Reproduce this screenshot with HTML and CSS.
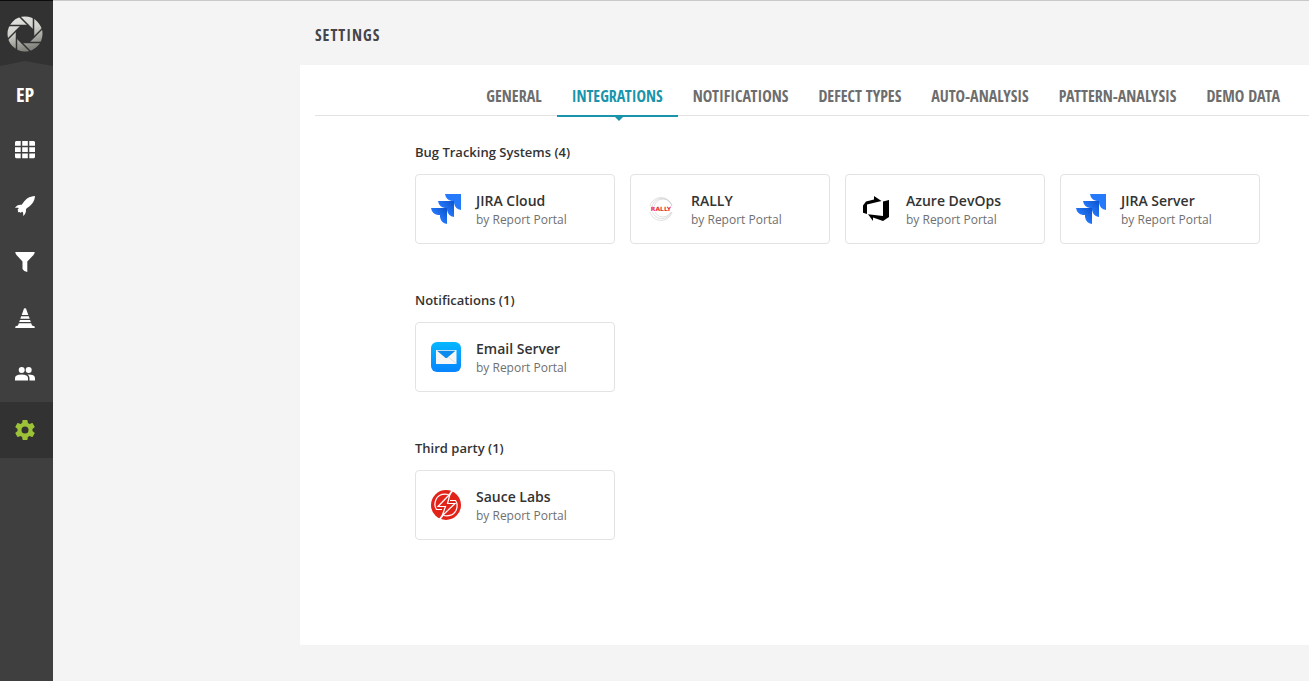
FILE: index.html
```html
<!DOCTYPE html>
<html lang="en">
<head>
<meta charset="utf-8">
<meta name="viewport" content="width=device-width, initial-scale=1">
<title>Settings</title>
<link rel="stylesheet" href="styles.css">
</head>
<body>
<svg class="defs" aria-hidden="true">
  <defs>
    <linearGradient id="jira-grad" x1="0.9" y1="0.1" x2="0.4" y2="0.6"><stop offset="0" stop-color="#0f58d2"/><stop offset="1" stop-color="#2579fb"/></linearGradient>
    <linearGradient id="mail-grad" x1="0" y1="0" x2="0" y2="1"><stop offset="0" stop-color="#06b7ff"/><stop offset="1" stop-color="#0784ff"/></linearGradient>
    <linearGradient id="logo-grad" x1="0" y1="0" x2="0.3" y2="1"><stop offset="0" stop-color="#e8e8e6"/><stop offset="0.5" stop-color="#d0d0cc"/><stop offset="1" stop-color="#85857f"/></linearGradient>
    <symbol id="jira" viewBox="0 0 30 30">
      <path fill="#2579fb" d="M14 0H30V16Q24 15 23 9V7H21Q15 6 14 0Z"/>
      <path fill="url(#jira-grad)" d="M7 7H23V23Q17 22 16 16V14H14Q8 13 7 7Z"/>
      <path fill="url(#jira-grad)" d="M0 14H16V30Q10 29 9 23V21H7Q1 20 0 14Z"/>
    </symbol>
  </defs>
</svg>
<div class="app">
  <aside class="sidebar">
    <a class="logo" href="#" aria-label="Home">
      <svg width="36" height="36" viewBox="-18 -18 36 36">
        <path fill="url(#logo-grad)" fill-rule="evenodd" d="M0-17.5A17.5 17.5 0 1 1 0 17.5A17.5 17.5 0 1 1 0-17.5ZM-3.500-8.500L-8.500-3.500V3.500L-3.500 8.500H3.500L8.500 3.500V-3.500L3.500-8.500Z"/>
        <g stroke="#323232" stroke-width="1.500">
          <path d="M3.500-8.500H-17"/><path d="M3.500-8.500H-17" transform="rotate(45)"/><path d="M3.500-8.500H-17" transform="rotate(90)"/><path d="M3.500-8.500H-17" transform="rotate(135)"/><path d="M3.500-8.500H-17" transform="rotate(180)"/><path d="M3.500-8.500H-17" transform="rotate(225)"/><path d="M3.500-8.500H-17" transform="rotate(270)"/><path d="M3.500-8.500H-17" transform="rotate(315)"/>
        </g>
      </svg>
    </a>
    <nav class="menu">
      <a class="menu-item project" href="#">EP</a>
      <a class="menu-item" href="#" aria-label="Dashboards"><svg width="20" height="18" viewBox="0 0 20 18" fill="#fff"><path d="M1 0H5.700V4.700H0V1ZM7.200 0H12.800V4.700H7.200ZM14.300 0H19L20 1V4.700H14.300ZM0 6.200H5.700V11H0ZM7.200 6.200H12.800V11H7.200ZM14.300 6.200H20V11H14.300ZM0 12.500H5.700V17.300H1L0 16.300ZM7.200 12.500H12.800V17.300H7.200ZM14.300 12.500H20V16.300L19 17.300H14.300Z"/></svg></a>
      <a class="menu-item" href="#" aria-label="Launches"><svg width="20" height="20" viewBox="0 0 20 20" fill="#fff"><path d="M20 0C14 .4 11 2.800 8 7L6.700 8.800C3.500 8.500 1.500 9.500 0 12C1.500 11.500 2.800 11.600 3.800 12L2.500 14L3.200 14.700L2.800 16.200L4.500 15.900L5.200 16.800L7.500 15.700C8.200 16.800 8.500 18 8 20C10.500 18.500 11.200 16 11 13L12.800 11.600C17 8.500 19.600 5.500 20 0Z"/></svg></a>
      <a class="menu-item" href="#" aria-label="Filters"><svg width="20" height="20" viewBox="0 0 20 20" fill="#fff"><path d="M.3 0H19.700Q19.700 1.500 18.500 3L12.300 9.600V20Q8.800 19.700 7.500 17V9.600L1.500 3Q.3 1.500.3 0Z"/></svg></a>
      <a class="menu-item" href="#" aria-label="Debug"><svg width="20" height="20" viewBox="0 0 20 20" fill="#fff"><path d="M9 .6Q10 0 11 .6L13.300 7H6.700ZM6.200 8.200H13.800L14.700 10.700H5.300ZM4.900 12H15.100L15.800 14H4.200ZM3.800 15.200H16.200L17 17.500L19.700 18.500V20H.3V18.500L3 17.500Z"/></svg></a>
      <a class="menu-item" href="#" aria-label="Members"><svg width="20" height="14" viewBox="0 0 20 14" fill="#fff"><circle cx="6.700" cy="3" r="3"/><circle cx="13.700" cy="3" r="3"/><path d="M0 13.500V11Q0 7.500 6.500 7.500T13 11V13.500ZM12.500 7.600Q20 7.500 20 11V13.500H14.500V11Q14.500 9 12.500 7.600Z"/></svg></a>
      <a class="menu-item active" href="#" aria-label="Settings" aria-current="page"><svg width="20" height="20" viewBox="2 2 20 20" fill="#9cc237"><path d="M19.430 12.980c.04-.32.070-.64.070-.98s-.03-.66-.07-.98l2.110-1.650c.19-.15.240-.42.120-.64l-2-3.460c-.12-.22-.39-.3-.61-.22l-2.490 1c-.52-.4-1.080-.73-1.690-.98l-.38-2.650C14.460 2.180 14.250 2 14 2h-4c-.25 0-.46.180-.49.420l-.38 2.650c-.61.250-1.170.59-1.690.98l-2.490-1c-.23-.09-.49 0-.61.220l-2 3.460c-.13.220-.07.490.12.640l2.110 1.650c-.04.320-.07.650-.07.980s.030.660.070.980l-2.110 1.650c-.19.150-.24.420-.12.640l2 3.460c.12.220.39.300.61.220l2.490-1c.52.400 1.080.730 1.690.980l.38 2.650c.030.240.240.420.490.420h4c.25 0 .46-.18.490-.42l.38-2.650c.61-.25 1.170-.59 1.690-.98l2.490 1c.23.090.49 0 .61-.22l2-3.460c.12-.22.070-.49-.12-.64zM12 15.500A3.500 3.500 0 1 1 12 8.500A3.500 3.500 0 1 1 12 15.500Z"/></svg></a>
    </nav>
  </aside>
  <main class="page">
    <h1 class="title">SETTINGS</h1>
    <div class="panel">
      <nav class="tabs">
        <a class="tab" href="#">GENERAL</a>
        <a class="tab selected" href="#" aria-current="page">INTEGRATIONS</a>
        <a class="tab" href="#">NOTIFICATIONS</a>
        <a class="tab" href="#">DEFECT TYPES</a>
        <a class="tab" href="#">AUTO-ANALYSIS</a>
        <a class="tab" href="#">PATTERN-ANALYSIS</a>
        <a class="tab" href="#">DEMO DATA</a>
      </nav>
      <div class="groups">
        <section class="group">
          <h2 class="group-title">Bug Tracking Systems (4)</h2>
          <div class="cards">
            <button class="card" type="button">
              <svg class="icon" viewBox="0 0 30 30"><use href="#jira"/></svg>
              <span class="info"><span class="name">JIRA Cloud</span><span class="by">by Report Portal</span></span>
            </button>
            <button class="card" type="button">
              <svg class="icon" viewBox="0 0 30 30"><g fill="none" stroke="#d2d2d2" stroke-width=".7"><circle cx="15" cy="15" r="11.500"/><circle cx="16" cy="14.500" r="10.200"/><circle cx="17" cy="14" r="9"/></g><path fill="#fff" d="M3 12H27V18H3Z"/><text class="rally" x="15" y="17">RALLY</text></svg>
              <span class="info"><span class="name">RALLY</span><span class="by">by Report Portal</span></span>
            </button>
            <button class="card" type="button">
              <svg class="icon" viewBox="0 0 30 30"><path d="M2 11.500L5 7.500L13 5.500V2L20.500 7L6 10.500V20L2 18.700ZM22 7.500L28 6V23L22 27L12 23.500V27L7 20.300L22 22Z"/></svg>
              <span class="info"><span class="name">Azure DevOps</span><span class="by">by Report Portal</span></span>
            </button>
            <button class="card" type="button">
              <svg class="icon" viewBox="0 0 30 30"><use href="#jira"/></svg>
              <span class="info"><span class="name">JIRA Server</span><span class="by">by Report Portal</span></span>
            </button>
          </div>
        </section>
        <section class="group">
          <h2 class="group-title">Notifications (1)</h2>
          <div class="cards">
            <button class="card" type="button">
              <svg class="icon" viewBox="0 0 30 30"><rect width="30" height="30" rx="6" fill="url(#mail-grad)"/><path fill="#f6f6f6" d="M5 8H25.500V22H5Z"/><path fill="#0b8bed" d="M6 8.800H24.500L16.500 15.500Q15.200 16.500 14 15.500Z"/><path fill="none" stroke="#c8cdd0" stroke-width=".6" d="M17.500 15L25 21.500"/></svg>
              <span class="info"><span class="name">Email Server</span><span class="by">by Report Portal</span></span>
            </button>
          </div>
        </section>
        <section class="group">
          <h2 class="group-title">Third party (1)</h2>
          <div class="cards">
            <button class="card" type="button">
              <svg class="icon" viewBox="0 0 30 30"><circle cx="15" cy="15" r="15" fill="#e2231a"/><g fill="none" stroke="#fff" stroke-width="1.200"><path stroke-width="1.800" d="M21.500 .5L17.500 6"/><path d="M19 4L7 16.500H14.500L11 26L24 13.500H16.500Z"/><path d="M17.500 4.500Q8 3 5 9.500Q2.500 15.500 5.500 19.500H11"/><path d="M12.500 25.500Q22 27 25 20.500Q27.500 14.500 24.500 10.500H19"/><path stroke-width="1.800" d="M12 25L8.500 29.500"/></g></svg>
              <span class="info"><span class="name">Sauce Labs</span><span class="by">by Report Portal</span></span>
            </button>
          </div>
        </section>
      </div>
    </div>
  </main>
</div>
</body>
</html>
```
FILE: styles.css
```css
* { box-sizing: border-box; }
body {
  margin: 0;
  background: #f4f4f4;
  color: #333;
  font-family: "Open Sans", "Noto Sans", sans-serif;
}
a { color: inherit; text-decoration: none; }
.defs { position: absolute; width: 0; height: 0; }
.app { display: flex; min-height: 100vh; }

.sidebar { flex: none; width: 53px; background: #3f3f40; border-top: 1px solid #0c0c0c; }
.logo {
  display: flex;
  height: 65px;
  padding: 15px 7px;
  background: #323232;
  clip-path: polygon(0 0, 100% 0, 100% 100%, 47% 60px, 0 100%);
}
.menu-item {
  display: flex;
  align-items: center;
  justify-content: center;
  height: 56px;
  padding-right: 3px;
}
.menu-item.active { background: #323232; }
.project {
  color: #fff;
  font-family: "Open Sans Condensed", "Liberation Sans Narrow", "Open Sans", sans-serif;
  font-size: 20px;
  font-weight: 800;
}

.page { flex: 1; min-width: 0; padding: 0 0 36px 247px; border-top: 1px solid #c9c9c9; }
.title {
  margin: 0;
  padding: 22px 15px 18px;
  color: #464547;
  font-family: "Open Sans Condensed", "Liberation Sans Narrow", "Open Sans", sans-serif;
  font-size: 16px;
  font-weight: 700;
  line-height: 24px;
  letter-spacing: 1px;
}
.panel { min-height: 580px; padding: 10px 0 0 15px; background: #fff; }
.tabs {
  display: flex;
  justify-content: flex-end;
  height: 41px;
  padding-right: 14px;
  border-bottom: 1px solid #e3e3e3;
}
.tab {
  height: 42px;
  padding: 0 15px;
  color: #6d6d6d;
  font-family: "Open Sans Condensed", "Liberation Sans Narrow", "Open Sans", sans-serif;
  font-size: 16px;
  font-weight: 700;
  line-height: 43px;
  white-space: nowrap;
}
.tab.selected { position: relative; color: #1a94ab; border-bottom: 2px solid #1a94ab; }
.tab.selected::after {
  content: "";
  position: absolute;
  top: calc(100% + 1px);
  left: calc(50% - 3px);
  border: 5px solid transparent;
  border-top-color: #1a94ab;
  border-bottom: 0;
}

.groups { display: flex; flex-direction: column; gap: 46px; padding: 26px 15px 0 100px; }
.group-title { margin: 0 0 12px; font-size: 13px; font-weight: 600; line-height: 20px; }
.cards { display: flex; flex-wrap: wrap; gap: 15px; }
.card {
  display: flex;
  align-items: center;
  gap: 15px;
  width: 200px;
  height: 70px;
  padding: 0 15px;
  border: 1px solid #e3e3e3;
  border-radius: 4px;
  background: #fff;
  color: inherit;
  font-family: inherit;
  text-align: left;
}
.icon { flex: none; width: 30px; height: 30px; }
.info { display: flex; flex-direction: column; gap: 1px; padding-top: 1px; }
.name { font-size: 14px; font-weight: 600; line-height: 19px; }
.by { color: #6f6f6f; font-size: 12px; line-height: 18px; }
.rally { fill: #e8303b; font-family: "DejaVu Sans", sans-serif; font-size: 6px; font-weight: 700; text-anchor: middle; }
```
